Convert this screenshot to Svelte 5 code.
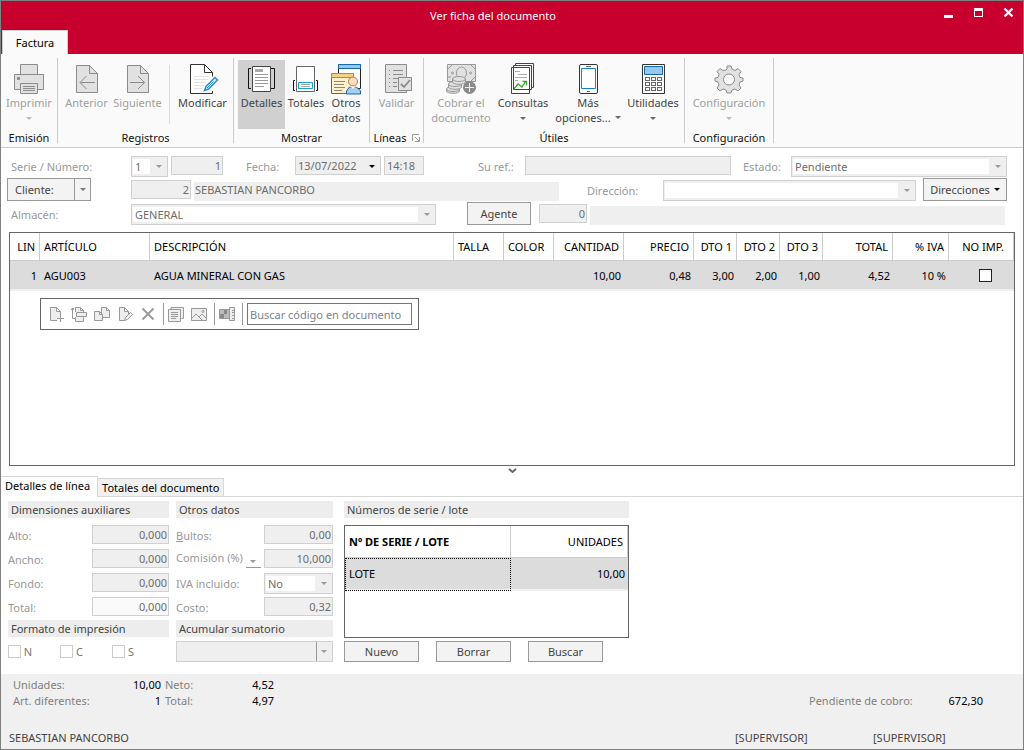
<script lang="ts">
	let line = $state({
		noTax: false,
		search: ''
	});

	const dimensions = [
		{ id: 'alto', label: 'Alto:', value: '0,000' },
		{ id: 'ancho', label: 'Ancho:', value: '0,000' },
		{ id: 'fondo', label: 'Fondo:', value: '0,000' },
		{ id: 'total', label: 'Total:', value: '0,000', light: true }
	];

	const columns = [
		{ name: 'LIN', cls: 'lin num' },
		{ name: 'ARTÍCULO', cls: 'art' },
		{ name: 'DESCRIPCIÓN', cls: 'desc' },
		{ name: 'TALLA', cls: 'size' },
		{ name: 'COLOR', cls: 'size' },
		{ name: 'CANTIDAD', cls: 'wide num' },
		{ name: 'PRECIO', cls: 'wide num' },
		{ name: 'DTO 1', cls: 'dto num' },
		{ name: 'DTO 2', cls: 'dto num' },
		{ name: 'DTO 3', cls: 'dto num' },
		{ name: 'TOTAL', cls: 'wide num' },
		{ name: '% IVA', cls: 'iva num' },
		{ name: 'NO IMP.', cls: 'noimp' }
	];

	const row = ['1', 'AGU003', 'AGUA MINERAL CON GAS', '', '', '10,00', '0,48', '3,00', '2,00', '1,00', '4,52', '10 %'];
</script>

{#snippet page(stroke: string, fill: string)}
	<path d="M5.5 2.500h13l8 8v19h-21z" fill={fill} stroke={stroke} />
	<path d="M18.500 2.500v8h8" fill="none" stroke={stroke} />
{/snippet}

<div class="window">
	<header class="titlebar">
		<h1>Ver ficha del documento</h1>
		<div class="controls">
			<button aria-label="Minimizar"><svg width="11" height="11"><path d="M1 8h9v3H1z" fill="#fff" /></svg></button>
			<button aria-label="Maximizar"><svg width="11" height="11"><path d="M1 1h9v9H1zM2 4v5h7V4z" fill="#fff" fill-rule="evenodd" /></svg></button>
			<button aria-label="Cerrar"><svg width="11" height="11"><path d="M1.500 1.500l8 8M9.500 1.500l-8 8" stroke="#fff" stroke-width="2.400" /></svg></button>
		</div>
		<button class="ribbon-tab">Factura</button>
	</header>

	<nav class="ribbon">
		<section class="group emision">
			<div class="tools">
				<button class="tool" disabled>
					<svg width="32" height="32" fill="#e1e1e1" stroke="#8b8b8b">
						<path d="M7.500 12V1.500h17V12" />
						<path d="M1.500 11.500h29v15h-29z" />
						<path d="M4.500 14.500h2v2h-2z" fill="#8b8b8b" />
						<path d="M7.500 20.500h17v10h-17zM10 23.500h12M10 25.500h12M10 27.500h12" />
					</svg>
					Imprimir
					<i class="arrow"></i>
				</button>
			</div>
			<h2>Emisión</h2>
		</section>

		<section class="group registros">
			<div class="tools">
				<button class="tool" disabled>
					<svg width="32" height="32">
						{@render page('#8b8b8b', '#e1e1e1')}
						<path d="M24 19.500H9.500M15.500 13l-6.500 6.500 6.500 6.500" fill="none" stroke="#8b8b8b" />
					</svg>
					Anterior
				</button>
				<button class="tool" disabled>
					<svg width="32" height="32">
						{@render page('#8b8b8b', '#e1e1e1')}
						<path d="M8 19.500h14.500M16 13l6.500 6.500-6.500 6.500" fill="none" stroke="#8b8b8b" />
					</svg>
					Siguiente
				</button>
				<span class="divider"></span>
				<button class="tool">
					<svg width="32" height="32">
						<path d="M22 30.500H3.500v-29h14l8 8v4" fill="#fff" stroke="#333" />
						<path d="M17.500 1.500v8h8z" fill="#fff" stroke="#333" />
						<path d="M7 13.500h15M7 16.500h14M7 19.500h12M7 22.500h10M7 25.500h8" stroke="#e2e2e2" />
						<path d="M17.500 27.500l1.500-4 9-9 2.500 2.500-9 9z" fill="#e6f3fb" stroke="#2b8fcb" stroke-width="1.500" />
						<path d="M20 25l6.500-6.500" stroke="#2b8fcb" />
						<path d="M22 30.500h3.500V28" fill="none" stroke="#333" />
					</svg>
					Modificar
				</button>
			</div>
			<h2>Registros</h2>
		</section>

		<section class="group mostrar">
			<div class="tools">
				<button class="tool active">
					<svg width="32" height="32" fill="none">
						<path d="M5 5.500H2.500v20H5M25 5.500h3.500v20H25" stroke="#111" />
						<path d="M6.500 3.500h18v25h-18z" fill="#fff" stroke="#444" />
						<path d="M9 6h8v3H9z" fill="#aaa" />
						<path d="M9 11.500h13M9 14.500h13M9 17.500h13M9 20.500h13M9 23.500h9" stroke="#999" />
					</svg>
					Detalles
				</button>
				<button class="tool totals">
					<svg width="32" height="32" fill="none">
						<path d="M5 17.500H3.500v10H5M26 17.500h1.500v10H26" stroke="#111" />
						<path d="M6.500 3.500h18v25h-18z" fill="#fff" stroke="#666" />
						<path d="M8.500 19.500h14v6h-14z" stroke="#16a0d8" />
						<path d="M11 21.500h9M11 23.500h9" stroke="#aaa" />
					</svg>
					Totales
				</button>
				<button class="tool other">
					<svg width="32" height="32" fill="none">
						<path d="M8.500 10V1.500h22v24H26" fill="#fff" stroke="#222" />
						<path d="M8.500 1.500h22v4h-22z" fill="#95c8ef" stroke="#1766aa" />
						<path d="M1.500 10.500h22v20h-22z" fill="#fff0ce" stroke="#666" />
						<path d="M1.500 10.500h22v4h-22z" fill="#f6cf83" stroke="#dc7c2b" />
						<path d="M4 18.500h11M4 21.500h10M4 24.500h11M4 27.500h8" stroke="#8c8778" />
						<path d="M16.500 31v-3l3-4h7l4 4v3z" fill="#a6ceee" stroke="#1766aa" />
						<path d="M20 23l3 3 3-3z" fill="#fff" />
						<circle cx="23" cy="18.500" r="4.500" fill="#fbddc1" stroke="#b87a45" />
					</svg>
					<span>Otros<br />datos</span>
				</button>
			</div>
			<h2>Mostrar</h2>
		</section>

		<section class="group lineas">
			<div class="tools">
				<button class="tool" disabled>
					<svg width="32" height="32" fill="none" stroke="#8b8b8b">
						<path d="M4.500 1.500h21v28h-21z" fill="#e1e1e1" />
						<path d="M8 7.500h1M8 11.500h1M8 15.500h1M8 19.500h1M8 23.500h1M12 7.500h10M12 11.500h10M12 15.500h6M12 19.500h4M12 23.500h4" />
						<path d="M17.500 14.500h13v13h-13z" fill="#e1e1e1" />
						<path d="M20 21l3 3 6-7" stroke-width="1.800" />
					</svg>
					Validar
				</button>
			</div>
			<h2>Líneas
				<svg width="8" height="8" fill="none" stroke="#999"><path d="M.500 7V.500H7M3 3l4 4M7.500 3v4.500H3" /></svg>
			</h2>
		</section>

		<section class="group utiles">
			<div class="tools">
				<button class="tool wide" disabled>
					<svg width="32" height="32" fill="#e1e1e1" stroke="#999">
						<path d="M2.500 1.500h28v17h-28z" />
						<path d="M3 6l4-4M26 2l4 4M30 14l-4 4M3 14h3" />
						<ellipse cx="16.500" cy="10" rx="5" ry="6" />
						<circle cx="7.500" cy="10" r="1" /><circle cx="25.500" cy="10" r="1" />
						<path d="M1.500 26v2c0 3 13 3 13 0v-2" />
						<ellipse cx="8" cy="26" rx="6.500" ry="2.500" />
						<path d="M3.500 21v3c0 3 13 3 13 0v-3" />
						<ellipse cx="10" cy="21" rx="6.500" ry="2.500" />
						<path d="M7.500 16v3c0 3 13 3 13 0v-3" />
						<ellipse cx="14" cy="16" rx="6.500" ry="2.500" />
						<circle cx="24.500" cy="24.500" r="6" fill="#8b8b8b" stroke="#8b8b8b" />
						<path d="M20 24.500h9M24.500 20v9" stroke="#eee" />
					</svg>
					<span>Cobrar el<br />documento</span>
				</button>
				<button class="tool wide">
					<svg width="32" height="32" fill="#fff" stroke="#444">
						<path d="M8.500 .500h18v24h-18z" />
						<path d="M6.500 2.500h18v24h-18zM4.500 4.500h18v26h-18z" />
						<path d="M8 8.500h5M11 11.500h9M8 14.500h12M8 17.500h3" stroke="#aaa" />
						<path d="M7 26l4-5 4 3 4-6M15.500 18.500h4v4" fill="none" stroke="#3ba532" stroke-width="1.300" />
					</svg>
					Consultas
					<i class="arrow"></i>
				</button>
				<button class="tool options">
					<svg width="32" height="32" fill="#fff" stroke="#333">
						<rect x="7.500" y="1.500" width="18" height="29" rx="1.500" />
						<path d="M9.500 5.500h14v20h-14z" stroke="#1680c5" />
						<path d="M14 3.500h5M15 28.500h3" stroke="#666" />
					</svg>
					<span>Más</span>
					<span class="inline">opciones... <i class="arrow"></i></span>
				</button>
				<button class="tool wide">
					<svg width="32" height="32" fill="#fff" stroke="#333">
						<path d="M5.500 1.500h22v29h-22z" />
						<path d="M7.500 3.500h18v8h-18z" fill="#95c8ef" stroke="#1766aa" />
						{#each [14, 19, 24] as y}
							{#each [8, 14, 20] as x}
								<rect x={x + 0.5} y={y + 0.5} width="4" height="3" stroke="#666" />
							{/each}
						{/each}
					</svg>
					Utilidades
					<i class="arrow"></i>
				</button>
			</div>
			<h2>Útiles</h2>
		</section>

		<section class="group config">
			<div class="tools">
				<button class="tool" disabled>
					<svg width="32" height="32" fill="#e1e1e1" stroke="#8b8b8b" stroke-linejoin="round">
						<path d="M13 7l1-1V3h4l1 3 3 1.500 3-2 3 3-2 3 1 3 3 .500v3l-3 1-1 3 2 3-3 3-3-2-3 1-1 3h-4l-1-3-3-1-3 2-3-3 2-3-1-3-3-1v-3l3-.500 1-3-2-3 3-3 3 2z" />
						<circle cx="16" cy="16.500" r="5.500" fill="#fafafa" />
					</svg>
					Configuración
					<i class="arrow"></i>
				</button>
			</div>
			<h2>Configuración</h2>
		</section>
	</nav>

	<form class="head">
		<div class="row">
			<label class="first" for="serie">Serie / Número:</label>
			<span class="combo serie"><select id="serie" disabled><option>1</option></select></span>
			<input class="numero num" aria-label="Número" value="1" disabled />
			<label class="fecha-label" for="fecha">Fecha:</label>
			<span class="combo date"><input id="fecha" value="13/07/2022" disabled /></span>
			<input class="time" aria-label="Hora" value="14:18" disabled />
			<label class="ref-label" for="ref">Su ref.:</label>
			<input id="ref" class="grow" disabled />
			<label class="estado-label" for="estado">Estado:</label>
			<span class="combo estado"><select id="estado" disabled><option>Pendiente</option></select></span>
		</div>
		<div class="row">
			<div class="first">
				<button type="button" class="btn split">Cliente:<span class="more"><i class="arrow"></i></span></button>
			</div>
			<input class="cliente num" aria-label="Código de cliente" value="2" disabled />
			<output class="grow">SEBASTIAN PANCORBO</output>
			<label class="dir-label" for="direccion">Dirección:</label>
			<span class="combo direccion"><select id="direccion" disabled><option></option></select></span>
			<button type="button" class="btn direcciones">Direcciones <i class="arrow"></i></button>
		</div>
		<div class="row">
			<label class="first" for="almacen">Almacén:</label>
			<span class="combo almacen"><select id="almacen" disabled><option>GENERAL</option></select></span>
			<button type="button" class="btn agente">Agente</button>
			<input class="agente-id num" aria-label="Código de agente" value="0" disabled />
			<output class="grow last"></output>
		</div>
	</form>

	<main class="grid">
		<table>
			<thead>
				<tr>
					{#each columns as column}
						<th class={column.cls}>{column.name}</th>
					{/each}
				</tr>
			</thead>
			<tbody>
				<tr>
					{#each row as value, index}
						<td class={columns[index].cls}>{value}</td>
					{/each}
					<td class="noimp"><input type="checkbox" aria-label="No imprimir" bind:checked={line.noTax} /></td>
				</tr>
			</tbody>
		</table>

		<div class="line-tools">
			<button aria-label="Nueva línea"><svg width="16" height="16"><path d="M9 14.500H2.500v-13h6l4 4V9M8.500 1.500v4h4M12.500 9v7M9 12.500h7" /></svg></button>
			<button aria-label="Insertar línea"><svg width="16" height="16"><path d="M4.500 6V1.500h5l3 3V6M9.500 1.500v3h3M4.500 11v4.500h8V11M5.500 6.500h10v4h-10z" /><path d="M3 2.500H1.500v10H4M0 4l1.500-2L3 4" fill="none" /></svg></button>
			<button aria-label="Duplicar línea"><svg width="16" height="16"><path d="M7.500 1.500h5l3 3v7h-8zM12.500 1.500v3h3" /><path d="M.500 5.500h5l3 3v6h-8zM5.500 5.500v3h3" /></svg></button>
			<button aria-label="Modificar línea"><svg width="16" height="16"><path d="M8 14.500H2.500v-13h5l4 4V8M7.500 1.500v4h4" /><path d="M7.500 14.500l1-3 5-5 2 2-5 5z" /></svg></button>
			<button aria-label="Eliminar línea"><svg width="16" height="16"><path d="M2.500 2.500l11 11M13.500 2.500l-11 11" stroke-width="1.800" /></svg></button>
			<span class="bar"></span>
			<button aria-label="Ver detalle"><svg width="16" height="16"><path d="M3 3.500V1.500h12.500v11h-2" /><path d="M.500 3.500h12v12H.500z" /><path d="M3 6.500h7M3 8.500h7M3 10.500h7M3 12.500h5" /></svg></button>
			<button aria-label="Imagen"><svg width="16" height="16"><path d="M.500 2.500h15v12H.500z" /><path d="M1 12l4-4 6 6M8 11l3-3 4 4" fill="none" /><circle cx="12" cy="5.500" r="1" /></svg></button>
			<span class="bar"></span>
			<button aria-label="Tallas y colores"><svg width="16" height="16"><path d="M.500 3.500h10v9H.500z" fill="#bbb" /><path d="M1 8h4v4H1zM5 4h3v4H5z" fill="#888" stroke="none" /><path d="M10.500 1.500h5v13h-5zM13 4.500h2M13 6.500h2M13 9.500h2M13 12.500h2" /></svg></button>
			<span class="bar"></span>
			<input aria-label="Buscar código" placeholder="Buscar código en documento" bind:value={line.search} />
		</div>
	</main>

	<button class="splitter" aria-label="Ocultar detalles"><svg width="9" height="6"><path d="M1 1l3.500 3L8 1" fill="none" stroke="#666" stroke-width="2" /></svg></button>

	<div class="tabs">
		<button class="selected">Detalles de línea</button>
		<button>Totales del documento</button>
	</div>

	<div class="details">
		<section class="dims">
			<h3>Dimensiones auxiliares</h3>
			<div class="fields">
				{#each dimensions as field}
					<div class="field">
						<label for={field.id}>{field.label}</label>
						<input id={field.id} class="num" class:light={field.light} value={field.value} disabled />
					</div>
				{/each}
			</div>
			<h3>Formato de impresión</h3>
			<div class="checks">
				{#each ['N', 'C', 'S'] as letter}
					<label><input type="checkbox" disabled />{letter}</label>
				{/each}
			</div>
		</section>

		<section class="others">
			<h3>Otros datos</h3>
			<div class="fields">
				<div class="field">
					<label for="bultos"><u>B</u>ultos:</label>
					<input id="bultos" class="num" value="0,00" disabled />
				</div>
				<div class="field">
					<label class="raised" for="comision">Comisión (%)</label>
					<button class="pick" aria-label="Tipo de comisión"><i class="arrow"></i></button>
					<input id="comision" class="num" value="10,000" disabled />
				</div>
				<div class="field">
					<label for="iva">IVA incluido:</label>
					<span class="combo"><select id="iva" disabled><option>No</option></select></span>
				</div>
				<div class="field">
					<label for="costo">Costo:</label>
					<input id="costo" class="num" value="0,32" disabled />
				</div>
			</div>
			<h3>Acumular sumatorio</h3>
			<span class="combo sum"><select aria-label="Acumular sumatorio" disabled><option></option></select></span>
		</section>

		<section class="lots">
			<h3>Números de serie / lote</h3>
			<div class="lot-grid">
				<table>
					<thead>
						<tr><th class="lot">Nº DE SERIE / LOTE</th><th class="num">UNIDADES</th></tr>
					</thead>
					<tbody>
						<tr><td class="lot focus">LOTE</td><td class="num">10,00</td></tr>
					</tbody>
				</table>
			</div>
			<div class="actions">
				<button class="btn">Nuevo</button>
				<button class="btn">Borrar</button>
				<button class="btn">Buscar</button>
			</div>
		</section>
	</div>

	<footer>
		<div class="summary">
			<dl class="units">
				<dt>Unidades:</dt><dd>10,00</dd>
				<dt>Art. diferentes:</dt><dd>1</dd>
			</dl>
			<dl class="amounts">
				<dt>Neto:</dt><dd>4,52</dd>
				<dt>Total:</dt><dd>4,97</dd>
			</dl>
			<dl class="pending">
				<dt>Pendiente de cobro:</dt><dd>672,30</dd>
			</dl>
		</div>
		<div class="status">
			<span>SEBASTIAN PANCORBO</span>
			<span class="user">[SUPERVISOR]</span>
			<span class="user">[SUPERVISOR]</span>
		</div>
	</footer>
</div>

<style>
	:global(body) {
		margin: 0;
	}

	.window,
	.window * {
		box-sizing: border-box;
	}

	.window {
		background: #fff;
		border: 1px solid #808080;
		color: #444;
		display: flex;
		flex-direction: column;
		font: 11px/15px 'Noto Sans', 'Open Sans', sans-serif;
		min-height: 100vh;
	}

	button,
	input,
	select {
		border-radius: 0;
		color: inherit;
		font: inherit;
		margin: 0;
		min-width: 0;
		opacity: 1;
		padding: 0;
	}

	button {
		background: none;
		border: 0;
	}

	h1,
	h2,
	h3,
	dl,
	dd {
		font: inherit;
		margin: 0;
	}

	table {
		border-collapse: separate;
		border-spacing: 0;
		color: #000;
		table-layout: fixed;
		width: 100%;
	}

	.arrow {
		border: 3px solid transparent;
		border-bottom: 0;
		border-top-color: currentColor;
		display: inline-block;
		height: 0;
		width: 0;
	}

	.num {
		text-align: right;
	}

	.grow {
		flex: 1 1 0;
	}

	/* title bar */
	.titlebar {
		background: #c8002d;
		color: #fff;
		display: grid;
		grid-template-columns: 1fr auto 1fr;
		grid-template-rows: 29px 24px;
	}

	.titlebar h1 {
		align-self: center;
		grid-column: 2;
		margin-right: 38px;
	}

	.controls {
		align-items: center;
		display: flex;
		gap: 19px;
		justify-content: flex-end;
		padding: 0 9px 6px 0;
	}

	.controls button {
		height: 11px;
		width: 11px;
	}

	.controls svg {
		display: block;
	}

	.ribbon-tab {
		background: #fafafa;
		border: 1px solid #ccc;
		border-bottom: 0;
		color: #000;
		justify-self: start;
		margin-left: 1px;
		width: 66px;
	}

	/* ribbon */
	.ribbon {
		background: #fafafa;
		border-bottom: 1px solid #ccc;
		display: flex;
		height: 94px;
		padding: 4px 0;
	}

	.group {
		border-right: 1px solid #ccc;
		display: flex;
		flex-direction: column;
		justify-content: space-between;
	}

	.group h2 {
		color: #111;
		line-height: 11px;
		text-align: center;
	}

	.tools {
		display: flex;
		justify-content: center;
		padding-top: 2px;
	}

	.tool {
		align-items: center;
		display: flex;
		flex-direction: column;
		height: 69px;
		padding-top: 3px;
		width: 51px;
	}

	.tool svg {
		flex: none;
	}

	.tool > .arrow {
		margin-top: 7px;
	}

	.tool .arrow {
		border-top-color: #666;
	}

	.tool:disabled {
		color: #a0a0a0;
	}

	.tool:disabled .arrow {
		border-top-color: #bbb;
	}

	.tool.active {
		background: #d0d0d0;
		width: 47px;
	}

	.tool.totals {
		width: 42px;
	}

	.tool.other {
		width: 38px;
	}

	.tool.wide {
		width: 62px;
	}

	.tool.options {
		width: 68px;
	}

	.inline {
		align-items: center;
		display: flex;
		gap: 4px;
		white-space: nowrap;
	}

	.divider {
		background: #ddd;
		margin: 5px 7px 5px 6px;
		width: 1px;
	}

	.emision {
		width: 57px;
	}

	.registros {
		width: 176px;
	}

	.registros .tools {
		justify-content: flex-start;
		padding-left: 3px;
	}

	.mostrar {
		width: 136px;
	}

	.lineas {
		width: 54px;
	}

	.lineas h2 {
		align-items: center;
		display: flex;
		gap: 5px;
		justify-content: center;
	}

	.utiles {
		width: 261px;
	}

	.utiles .tools {
		justify-content: flex-end;
	}

	.config {
		width: 89px;
	}

	.config .tool {
		width: 84px;
	}

	/* document header */
	.head {
		display: flex;
		flex-direction: column;
		gap: 3px;
		padding: 8px 16px 7px 6px;
	}

	.row {
		display: flex;
		gap: 3px;
		height: 21px;
	}

	.row label {
		align-self: center;
		color: #999;
	}

	.first {
		align-items: center;
		display: flex;
		width: 121px;
	}

	label.first {
		padding-left: 4px;
	}

	input,
	select {
		appearance: none;
		background: #efefef;
		border: 1px solid #d0d0d0;
		color: #6d6d6d;
		height: 19px;
		padding: 0 3px;
	}

	input.num {
		padding: 0 1px;
	}

	.combo {
		display: flex;
		position: relative;
	}

	.combo::after {
		border: 3px solid transparent;
		border-bottom: 0;
		border-top-color: #999;
		content: '';
		pointer-events: none;
		position: absolute;
		right: 6px;
		top: 9px;
	}

	.combo select {
		background: linear-gradient(#fff, #fff) 1px 2px / calc(100% - 18px) calc(100% - 4px) no-repeat #efefef;
		height: 21px;
		padding: 0 18px 0 3px;
		width: 100%;
	}

	.combo input {
		padding: 0 2px;
		width: 100%;
	}

	.combo.date::after {
		border-top-color: #000;
	}

	.serie {
		width: 37px;
	}

	.numero {
		width: 52px;
	}

	.fecha-label {
		margin-left: 20px;
		width: 46px;
	}

	.date {
		width: 86px;
	}

	.time {
		padding: 0 2px;
		width: 40px;
	}

	.ref-label {
		margin-left: 51px;
		width: 44px;
	}

	.estado-label {
		margin-left: 9px;
		width: 45px;
	}

	.estado {
		width: 216px;
	}

	.cliente {
		width: 60px;
	}

	output {
		align-self: flex-end;
		background: #efefef;
		color: #6d6d6d;
		height: 19px;
		line-height: 15px;
		padding-left: 1px;
	}

	.dir-label {
		margin-left: 25px;
		width: 73px;
	}

	.direccion {
		width: 253px;
	}

	.almacen {
		width: 305px;
	}

	.btn {
		align-items: center;
		background: #f3f3f3;
		border: 1px solid #999;
		color: #444;
		display: flex;
		height: 23px;
		justify-content: center;
	}

	.row .btn {
		align-self: flex-end;
	}

	.split {
		justify-content: space-between;
		padding-left: 7px;
		width: 84px;
	}

	.more {
		align-items: center;
		border-left: 1px solid #999;
		color: #777;
		display: flex;
		height: 100%;
		justify-content: center;
		width: 16px;
	}

	.direcciones {
		gap: 4px;
		margin-left: 4px;
		width: 84px;
	}

	.direcciones .arrow {
		color: #000;
	}

	.agente {
		margin-left: 28px;
		width: 64px;
	}

	.agente-id {
		margin-left: 5px;
		width: 48px;
	}

	.last {
		margin-right: 2px;
	}

	/* document lines */
	.grid {
		border: 1px solid #666;
		flex: 1 1 auto;
		margin: 0 8px;
		min-height: 234px;
	}

	th {
		border-bottom: 1px solid #ccc;
		border-right: 1px solid #ccc;
		font-weight: normal;
		height: 28px;
		padding: 0 4px;
		text-align: left;
		white-space: nowrap;
	}

	td {
		background: #dcdcdc;
		border-bottom: 2px solid #f0f0f0;
		height: 30px;
		padding: 0 4px;
	}

	th.num {
		text-align: right;
	}

	td.num {
		padding-right: 3px;
	}

	.lin {
		width: 30px;
	}

	.art {
		width: 110px;
	}

	.size {
		width: 50px;
	}

	.wide {
		width: 70px;
	}

	.dto {
		width: 43px;
	}

	.iva {
		width: 56px;
	}

	.noimp {
		padding: 0 0 0 8px;
		text-align: center;
		width: 65px;
	}

	input[type='checkbox'] {
		background: #fff;
		border: 1px solid #ccc;
		height: 13px;
		padding: 0;
		width: 13px;
	}

	input[type='checkbox']:checked {
		background: #666;
	}

	td input[type='checkbox'] {
		border-color: #222;
		display: block;
		margin: auto;
	}

	th.noimp {
		padding-left: 4px;
	}

	.line-tools {
		align-items: center;
		border: 1px solid #666;
		display: flex;
		height: 32px;
		margin: 7px 0 0 30px;
		padding: 0 6px 0 7px;
		width: 379px;
	}

	.line-tools button {
		height: 16px;
		margin-right: 7px;
		width: 16px;
	}

	.line-tools svg {
		display: block;
		fill: #eee;
		stroke: #999;
	}

	.bar {
		background: #999;
		height: 22px;
		margin-right: 4px;
		width: 1px;
	}

	.line-tools input {
		background: #fff;
		border-color: #777;
		flex: 1;
		height: 22px;
		padding: 0 2px;
	}

	.line-tools input::placeholder {
		color: #7a8290;
		opacity: 1;
	}

	.splitter {
		align-self: center;
		display: flex;
		height: 10px;
		padding-top: 2px;
	}

	/* detail tabs */
	.tabs {
		align-items: flex-end;
		border-bottom: 1px solid #d8d8d8;
		display: flex;
		height: 21px;
	}

	.tabs button {
		background: #f0f0f0;
		border: 1px solid #d8d8d8;
		border-bottom: 0;
		border-left: 0;
		color: #000;
		height: 18px;
		padding: 0 4px;
	}

	.tabs .selected {
		background: #fff;
		height: 21px;
		margin-bottom: -1px;
		padding: 0 7px 3px 4px;
	}

	.details {
		display: flex;
		height: 177px;
		padding: 4px 7px 0;
	}

	h3 {
		background: #ededed;
		height: 17px;
		line-height: 17px;
		padding-left: 3px;
	}

	.dims {
		margin-right: 7px;
		width: 161px;
	}

	.others {
		margin-right: 11px;
		width: 157px;
	}

	.lots {
		width: 285px;
	}

	.fields {
		display: flex;
		flex-direction: column;
		gap: 5px;
		padding: 7px 0 4px;
	}

	.field {
		display: flex;
		height: 19px;
		justify-content: space-between;
	}

	.field label {
		align-self: flex-end;
		color: #999;
		line-height: 17px;
		white-space: nowrap;
	}

	.field .raised {
		align-self: flex-start;
	}

	.field input {
		width: 77px;
	}

	.field input.light {
		background: #fafafa;
	}

	.others .field input,
	.field .combo {
		width: 69px;
	}

	.pick {
		border-bottom: 1px solid #999;
		color: #999;
		width: 15px;
	}

	.checks {
		display: flex;
		gap: 28px;
		padding-top: 7px;
	}

	.checks label {
		align-items: center;
		color: #777;
		display: flex;
		gap: 3px;
		width: 24px;
	}

	.sum {
		margin-top: 4px;
	}

	.sum select {
		background: linear-gradient(#999, #999) right 15px top 0 / 1px 100% no-repeat #efefef;
	}

	.lot-grid {
		border: 1px solid #666;
		height: 113px;
		margin-top: 7px;
	}

	.lot {
		width: 166px;
	}

	.lot-grid th {
		height: 32px;
	}

	th.lot {
		font-weight: bold;
	}

	.lot-grid td {
		height: 33px;
	}

	.focus {
		outline: 1px dotted #000;
		outline-offset: -1px;
	}

	.actions {
		display: flex;
		gap: 17px;
		padding-top: 3px;
	}

	.actions .btn {
		height: 21px;
		width: 75px;
	}

	/* footer */
	footer {
		background: #f0f0f0;
		display: flex;
		flex-direction: column;
		height: 75px;
		justify-content: space-between;
		padding: 3px 8px 4px;
	}

	.summary {
		display: flex;
		gap: 4px;
		padding-left: 4px;
	}

	dl {
		display: grid;
		grid-template-columns: auto auto;
		justify-content: space-between;
		line-height: 16px;
	}

	dt {
		color: #808080;
	}

	dd {
		color: #000;
		text-align: right;
	}

	.units {
		width: 148px;
	}

	.amounts {
		width: 109px;
	}

	.pending {
		align-self: flex-end;
		margin-left: auto;
		margin-right: 32px;
		width: 174px;
	}

	.status {
		display: flex;
		padding-right: 4px;
	}

	.status span:first-child {
		flex: 1;
	}

	.user {
		width: 138px;
	}
</style>
